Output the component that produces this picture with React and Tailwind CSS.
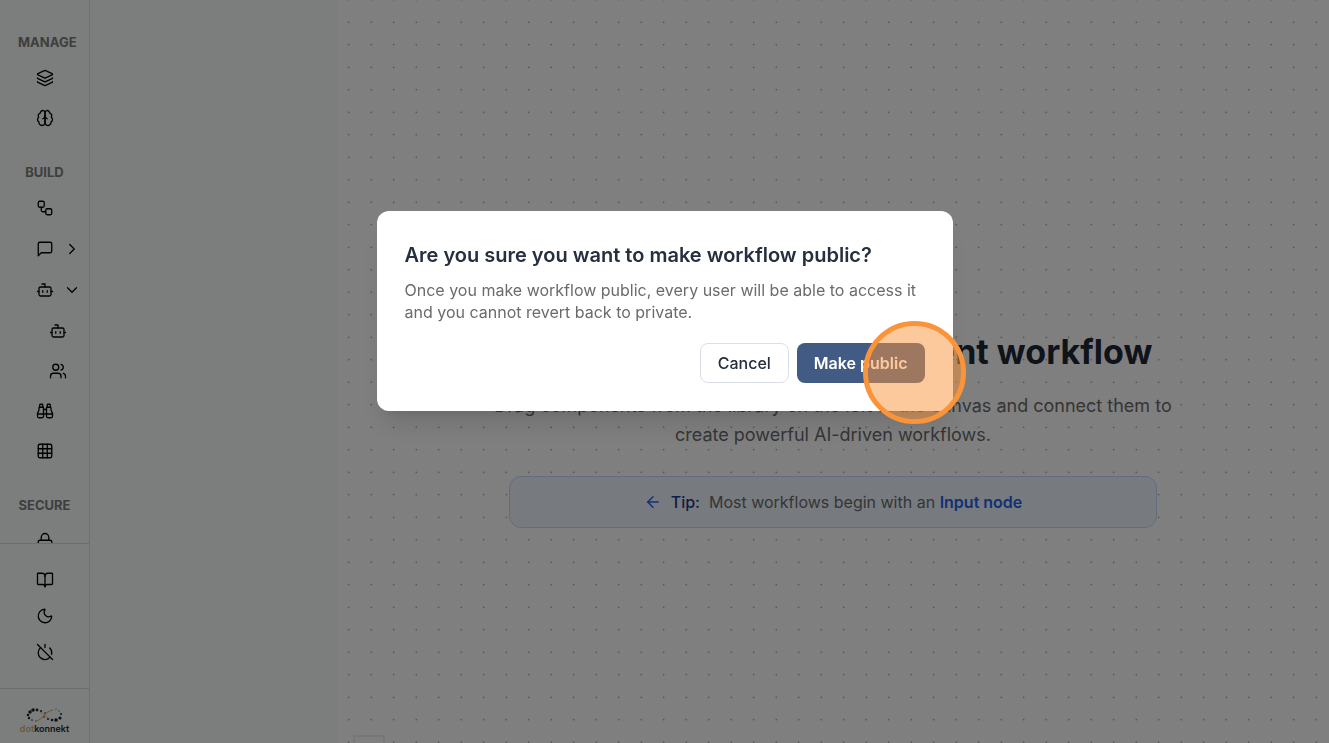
import React from 'react';
import {
  ArrowLeft,
  Binoculars,
  BookOpen,
  Bot,
  ChevronDown,
  ChevronRight,
  Grid3x3,
  Layers,
  Lock,
  Moon,
  PowerOff,
  Users,
  Workflow,
} from 'lucide-react';

const ICON = { size: 18, strokeWidth: 1.75 };

const LineIcon = ({ children }) => (
  <svg width="18" height="18" viewBox="0 0 24 24" fill="none" stroke="currentColor" strokeWidth="1.75" strokeLinecap="round" strokeLinejoin="round">
    {children}
  </svg>
);

const ChatIcon = () => (
  <LineIcon>
    <path d="M21 15a2 2 0 0 1-2 2H7l-4 4V5a2 2 0 0 1 2-2h14a2 2 0 0 1 2 2z" />
  </LineIcon>
);

const BrainIcon = () => (
  <LineIcon>
    <path d="M12 5a3 3 0 1 0-5.997.125 4 4 0 0 0-2.526 5.77 4 4 0 0 0 .556 6.588A4 4 0 1 0 12 18Z" />
    <path d="M12 5a3 3 0 1 1 5.997.125 4 4 0 0 1 2.526 5.77 4 4 0 0 1-.556 6.588A4 4 0 1 1 12 18Z" />
    <path d="M15 13a4.5 4.5 0 0 1-3-4 4.5 4.5 0 0 1-3 4" />
  </LineIcon>
);

const NavSection = ({ title, children }) => (
  <section>
    <h2 className="h-[34px] px-[18px] text-center text-[13px] leading-9 font-bold text-[#7c7c7c]">{title}</h2>
    {children}
  </section>
);

const NavItem = ({ label, children }) => (
  <a href="#" aria-label={label} className="flex h-10 items-center justify-center">
    {children}
  </a>
);

const NavGroup = ({ label, icon, chevron, open = false }) => (
  <button type="button" aria-label={label} aria-expanded={open} className="grid h-[41px] w-full grid-cols-[1fr_18px_1fr] items-center">
    <span />
    {icon}
    <span className="pl-[9px]">{chevron}</span>
  </button>
);

const LOGO_DOTS = [
  [13, 2, 1.8], [10, 4, 1.7], [8, 7, 1.3], [9, 10, 1.2], [12, 12, 0.8], [17, 2, 1.4], [21, 3, 1.1],
  [25, 5, 0.8], [24, 9, 0.8], [28, 11, 1], [32, 12, 1.3], [36, 12, 1.8], [40, 10, 1.6], [41, 6, 1],
  [39, 3, 0.6], [36, 1, 0.5], [16, 13, 0.5],
];

const Logo = () => (
  <div className="flex flex-col items-center">
    <svg width="50" height="16" viewBox="0 0 50 16">
      {LOGO_DOTS.map(([x, y, r]) => (
        <circle key={`${x}-${y}`} cx={x} cy={y} r={r} fill="#1d2236" />
      ))}
      <path d="M15 13c7 0 10-10 18-11" fill="none" stroke="#dfa860" strokeWidth="1" />
      <path d="M20 4c4 2 6 5 10 7" fill="none" stroke="#dfa860" strokeWidth="0.7" />
    </svg>
    <span className="text-[9px] leading-[10px] font-semibold text-[#2b2b2b]">
      <span className="text-[#dcb06a]">dot</span>konnekt
    </span>
  </div>
);

const Sidebar = () => (
  <aside className="flex w-[90px] shrink-0 flex-col border-r border-[#dfe3e1] bg-[#f7fcfa] text-black">
    <nav className="flex min-h-0 flex-1 flex-col gap-4 overflow-hidden pt-6">
      <NavSection title="MANAGE">
        <NavItem label="Stacks"><Layers {...ICON} /></NavItem>
        <NavItem label="Models"><BrainIcon /></NavItem>
      </NavSection>
      <NavSection title="BUILD">
        <NavItem label="Workflows"><Workflow {...ICON} /></NavItem>
        <NavGroup label="Chat" icon={<ChatIcon />} chevron={<ChevronRight {...ICON} />} />
        <NavGroup label="Agents" open icon={<Bot {...ICON} />} chevron={<ChevronDown {...ICON} />} />
        <div className="pt-px pl-[26px]">
          <NavItem label="Agent"><Bot {...ICON} /></NavItem>
          <NavItem label="Agent teams"><Users {...ICON} /></NavItem>
        </div>
        <NavItem label="Explore"><Binoculars {...ICON} /></NavItem>
        <NavItem label="Tables"><Grid3x3 {...ICON} /></NavItem>
      </NavSection>
      <NavSection title="SECURE">
        <NavItem label="Vault"><Lock {...ICON} /></NavItem>
      </NavSection>
    </nav>
    <div className="border-t border-[#d8dcda] py-[18px]">
      <a href="#" aria-label="Docs" className="flex h-9 items-center justify-center"><BookOpen {...ICON} /></a>
      <button type="button" aria-label="Dark mode" className="flex h-9 w-full items-center justify-center"><Moon {...ICON} /></button>
      <button type="button" aria-label="Log out" className="flex h-9 w-full items-center justify-center"><PowerOff {...ICON} /></button>
    </div>
    <div className="flex h-[55px] justify-center border-t border-[#d8dcda] pt-[19px]">
      <Logo />
    </div>
  </aside>
);

const Canvas = () => (
  <main className="relative min-w-0 flex-1 overflow-hidden bg-white">
    <svg className="absolute inset-0 h-full w-full" aria-hidden="true">
      <pattern id="canvas-dots" x="0.5" y="11" width="22.5" height="22.5" patternUnits="userSpaceOnUse">
        <circle cx="11.25" cy="11.25" r="0.7" fill="#777777" />
      </pattern>
      <rect width="100%" height="100%" fill="url(#canvas-dots)" />
    </svg>

    <div className="relative mx-auto flex max-w-[696px] flex-col items-center pt-[332px] text-center">
      <h1 className="text-[34px] leading-10 font-bold whitespace-nowrap text-[#1f2937]">Begin creating your AI Agent workflow</h1>
      <p className="mt-[19px] text-lg leading-[29px] text-[#6b6b6b]">
        Drag components from the library on the left to the canvas and connect them to create powerful AI-driven workflows.
      </p>
      <div className="mt-[27px] flex h-[52px] w-[648px] max-w-full items-center justify-center rounded-xl border border-[#bfdbfe] bg-[#eff6ff]">
        <ArrowLeft size={18} className="mr-[9px] text-[#2563eb]" />
        <span className="mr-[9px] font-medium text-[#1e3a8a]">Tip:</span>
        <span className="text-[#6b6b6b]">
          Most workflows begin with an <strong className="font-semibold text-[#2563eb]">Input node</strong>
        </span>
      </div>
    </div>

    <div className="absolute bottom-0 left-4 h-2 w-8 border-2 border-b-0 border-[#eeeeee] bg-white" />
  </main>
);

const ConfirmDialog = () => (
  <div className="fixed inset-0 flex items-start justify-center bg-black/50 pt-[211px]">
    <div role="dialog" aria-modal="true" aria-labelledby="dialog-title" className="w-xl rounded-xl bg-white p-7 shadow-xl">
      <h2 id="dialog-title" className="text-xl leading-8 font-semibold text-[#252f3d]">
        Are you sure you want to make workflow public?
      </h2>
      <p className="mt-2 text-base leading-[22px] text-[#6b6b6b]">
        Once you make workflow public, every user will be able to access it and you cannot revert back to private.
      </p>
      <div className="mt-5 flex justify-end gap-2">
        <button type="button" className="h-10 rounded-lg border border-[#dcdfe6] bg-white px-[17px] font-medium text-[#252f3d]">
          Cancel
        </button>
        <div className="relative">
          <button type="button" className="h-10 rounded-lg bg-[#425b84] px-[17px] font-semibold text-white">
            Make public
          </button>
          <span className="pointer-events-none absolute -top-[22px] -right-[41px] size-[103px] rounded-full border-[5px] border-[#f9943b] bg-[#f9943b]/50" />
        </div>
      </div>
    </div>
  </div>
);

export default function App() {
  return (
    <div className="flex h-screen overflow-hidden font-['Inter',sans-serif]">
      <Sidebar />
      <aside className="w-[247px] shrink-0 bg-[#f7fcfa]" />
      <Canvas />
      <ConfirmDialog />
    </div>
  );
}
